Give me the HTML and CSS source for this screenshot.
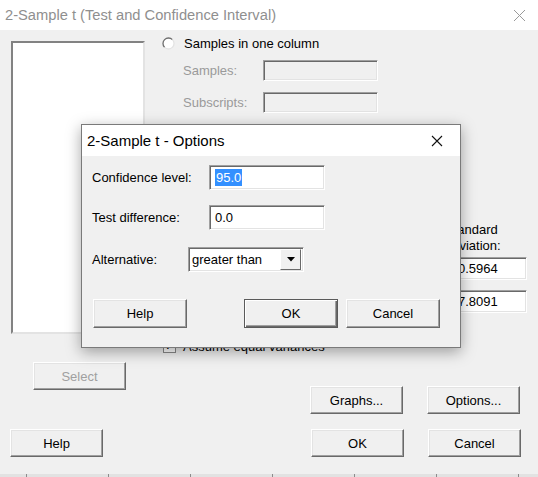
FILE: index.html
```html
<!DOCTYPE html>
<html lang="en">
<head>
    <meta charset="UTF-8">
    <title>2-Sample t (Test and Confidence Interval)</title>
    <link rel="stylesheet" href="styles.css">
</head>
<body>

    <!-- Main window -->
    <div class="titlebar">
        <span class="title">2-Sample t (Test and Confidence Interval)</span>
        <svg class="close" width="13" height="13" viewBox="0 0 13 13">
            <path d="M1 1 L12 12 M12 1 L1 12" stroke="#9a9a9a" stroke-width="1" fill="none"/>
        </svg>
    </div>

    <div class="client">
        <div class="top">
            <div class="left-col">
                <div class="listbox"></div>
                <button class="btn select" disabled>Select</button>
            </div>

            <div class="right-col">
                <div class="radio-row">
                    <svg class="radio" width="13" height="13" viewBox="0 0 13 13">
                        <circle cx="6.5" cy="6.5" r="5.5" fill="#fff"/>
                        <path d="M2.6 10.4 A5.5 5.5 0 0 1 10.4 2.6" stroke="#6d6d6d" stroke-width="1.3" fill="none"/>
                        <path d="M10.4 2.6 A5.5 5.5 0 0 1 2.6 10.4" stroke="#e3e3e3" stroke-width="1.3" fill="none"/>
                    </svg>
                    <span>Samples in one column</span>
                </div>
                <div class="field-row dim">
                    <span class="field-label">Samples:</span>
                    <span class="field disabled wide"></span>
                </div>
                <div class="field-row dim second">
                    <span class="field-label">Subscripts:</span>
                    <span class="field disabled wide"></span>
                </div>

                <!-- summarized data (mostly under the options dialog) -->
                <div class="summary">
                    <div class="sum-head">
                        <span class="sum-cell"></span>
                        <span class="sum-cell"></span>
                        <span class="sum-cell">Standard<br>deviation:</span>
                    </div>
                    <div class="sum-row">
                        <span class="field sum-field"></span>
                        <span class="field sum-field"></span>
                        <span class="field sum-field">0.5964</span>
                    </div>
                    <div class="sum-row">
                        <span class="field sum-field"></span>
                        <span class="field sum-field"></span>
                        <span class="field sum-field">7.8091</span>
                    </div>
                </div>

                <div class="check-row">
                    <span class="checkbox">&#10003;</span>
                    <span>Assume equal variances</span>
                </div>

                <div class="btn-row graphs-row">
                    <button class="btn">Graphs...</button>
                    <button class="btn">Options...</button>
                </div>
            </div>
        </div>

        <div class="btn-row bottom-row">
            <button class="btn">Help</button>
            <span class="spacer"></span>
            <button class="btn">OK</button>
            <button class="btn">Cancel</button>
        </div>

        <div class="sheet-strip">
            <span></span><span></span><span></span><span></span><span></span><span></span><span></span>
        </div>
    </div>

    <!-- Options dialog -->
    <div class="dialog">
        <div class="dlg-titlebar">
            <span class="dlg-title">2-Sample t - Options</span>
            <svg class="close" width="12" height="12" viewBox="0 0 12 12">
                <path d="M1 1 L11 11 M11 1 L1 11" stroke="#111" stroke-width="1.1" fill="none"/>
            </svg>
        </div>
        <div class="dlg-body">
            <div class="dlg-row">
                <span class="dlg-label">Confidence level:</span>
                <span class="field dlg-field"><span class="selected">95.0</span></span>
            </div>
            <div class="dlg-row">
                <span class="dlg-label">Test difference:</span>
                <span class="field dlg-field">0.0</span>
            </div>
            <div class="dlg-row alt-row">
                <span class="dlg-label alt-label">Alternative:</span>
                <span class="field combo">
                    <span class="combo-text">greater than</span>
                    <span class="combo-btn">
                        <svg width="8" height="5" viewBox="0 0 8 5"><path d="M0 0 H8 L4 4.5 Z" fill="#000"/></svg>
                    </span>
                </span>
            </div>
            <div class="dlg-buttons">
                <button class="btn dlg-btn">Help</button>
                <span class="spacer"></span>
                <button class="btn dlg-btn default">OK</button>
                <button class="btn dlg-btn">Cancel</button>
            </div>
        </div>
    </div>

</body>
</html>
```

FILE: styles.css
```css
/* Page */
body {
    margin: 0;
    width: 538px;
    height: 477px;
    overflow: hidden;
    position: relative;
    background-color: #f0f0f0;
    font-family: "Liberation Sans", Arial, sans-serif;
    font-size: 13px;
    color: #000;
}

/* Main window title */
.titlebar {
    height: 30px;
    background-color: #fff;
    display: flex;
    align-items: center;
    justify-content: space-between;
    padding: 0 12px 0 5px;
}

.title {
    font-size: 14.7px;
    color: #8f8f8f;
}

.client {
    display: flex;
    flex-direction: column;
}

.top {
    display: flex;
    height: 385px;
}

/* Left column */
.left-col {
    margin-left: 11px;
    width: 134px;
    display: flex;
    flex-direction: column;
}

.listbox {
    margin-top: 11px;
    height: 289px;
    background-color: #fff;
    border: 2px solid;
    border-color: #828282 #e3e3e3 #e3e3e3 #828282;
}

.select {
    margin: 28px 0 0 22px;
}

/* Right column */
.right-col {
    margin-left: 16px;
    width: 366px;
    display: flex;
    flex-direction: column;
}

.radio-row {
    margin-top: 5px;
    height: 16px;
    display: flex;
    align-items: center;
}

.radio {
    margin: 0 9px 0 1px;
}

.field-row {
    display: flex;
    align-items: center;
    margin: 9px 0 0 22px;
    height: 21px;
}

.field-row.second {
    margin-top: 11px;
}

.dim {
    color: #9a9a9a;
}

.field-label {
    width: 80px;
}

.field {
    box-sizing: border-box;
    background-color: #fff;
    border: 1px solid;
    border-color: #a0a0a0 #fff #fff #a0a0a0;
    box-shadow: inset 1px 1px 0 #696969, inset -1px -1px 0 #e3e3e3;
    display: flex;
    align-items: center;
    padding-left: 4px;
    flex-shrink: 0;
}

.field.disabled {
    background-color: #f0f0f0;
}

.wide {
    width: 115px;
    height: 21px;
}

/* Summarized data block */
.summary {
    margin: 109px 0 0 134px;
    display: flex;
    flex-direction: column;
}

.sum-head {
    display: flex;
    gap: 8px;
    line-height: 16px;
    margin-left: -10px;
}

.sum-cell {
    width: 72px;
    flex-shrink: 0;
}

.sum-row {
    display: flex;
    gap: 8px;
    margin-top: 3px;
}

.sum-row + .sum-row {
    margin-top: 10px;
}

.sum-field {
    width: 72px;
    height: 23px;
    padding-left: 2px;
}

.check-row {
    margin: 26px 0 0 2px;
    height: 14px;
    display: flex;
    align-items: center;
}

.checkbox {
    box-sizing: border-box;
    width: 13px;
    height: 13px;
    margin-right: 7px;
    background-color: #fff;
    border: 1px solid #8a8a8a;
    font-size: 11px;
    line-height: 11px;
    text-align: center;
}

/* Buttons */
.btn {
    box-sizing: border-box;
    width: 93px;
    height: 28px;
    background-color: #f0f0f0;
    border: 1px solid;
    border-color: #fff #696969 #696969 #fff;
    box-shadow: inset -1px -1px 0 #a0a0a0, inset 1px 1px 0 #e3e3e3;
    font-family: inherit;
    font-size: 13px;
    color: #000;
    padding: 0;
}

.btn:disabled {
    color: #a0a0a0;
}

.btn-row {
    display: flex;
    gap: 24px;
}

.graphs-row {
    margin: 33px 0 0 149px;
}

.bottom-row {
    margin: 14px 0 0 10px;
    width: 511px;
    gap: 24px;
}

.spacer {
    flex: 1;
}

/* worksheet edge at the bottom */
.sheet-strip {
    margin-top: 17px;
    height: 3px;
    overflow: hidden;
    background-color: #e2e2e2;
    display: flex;
    padding-left: 26px;
}

.sheet-strip span {
    width: 81px;
    flex-shrink: 0;
    border-left: 1px solid #8c8c8c;
}

/* Options dialog */
.dialog {
    position: absolute;
    left: 81px;
    top: 124px;
    width: 380px;
    height: 224px;
    box-sizing: border-box;
    border: 1px solid #7a7a7a;
    background-color: #f0f0f0;
    box-shadow: 0 4px 14px rgba(0, 0, 0, 0.35);
}

.dlg-titlebar {
    height: 31px;
    background-color: #fff;
    display: flex;
    align-items: center;
    justify-content: space-between;
    padding: 0 17px 0 5px;
}

.dlg-title {
    font-size: 15px;
}

.dlg-body {
    padding: 9px 0 0 10px;
}

.dlg-row {
    display: flex;
    align-items: center;
    height: 25px;
    margin-bottom: 15px;
}

.dlg-label {
    width: 117px;
}

.dlg-field {
    width: 116px;
    height: 25px;
    padding-left: 5px;
}

.selected {
    background-color: #3390ff;
    color: #fff;
    line-height: 17px;
    padding: 0 1px;
}

.alt-row {
    margin-top: 17px;
}

.alt-label {
    width: 96px;
}

.combo {
    width: 116px;
    height: 25px;
    padding: 0 2px 0 3px;
    justify-content: space-between;
}

.combo-btn {
    box-sizing: border-box;
    width: 21px;
    height: 21px;
    background-color: #f0f0f0;
    border: 1px solid;
    border-color: #fff #696969 #696969 #fff;
    display: flex;
    align-items: center;
    justify-content: center;
}

.dlg-buttons {
    display: flex;
    gap: 8px;
    width: 347px;
    margin: 27px 0 0 1px;
}

.dlg-btn {
    width: 94px;
    height: 29px;
}

.dlg-btn.default {
    border: 1px solid #5a5a5a;
    box-shadow: inset 1px 1px 0 #fff, inset -1px -1px 0 #696969, inset -2px -2px 0 #a0a0a0;
}
```
